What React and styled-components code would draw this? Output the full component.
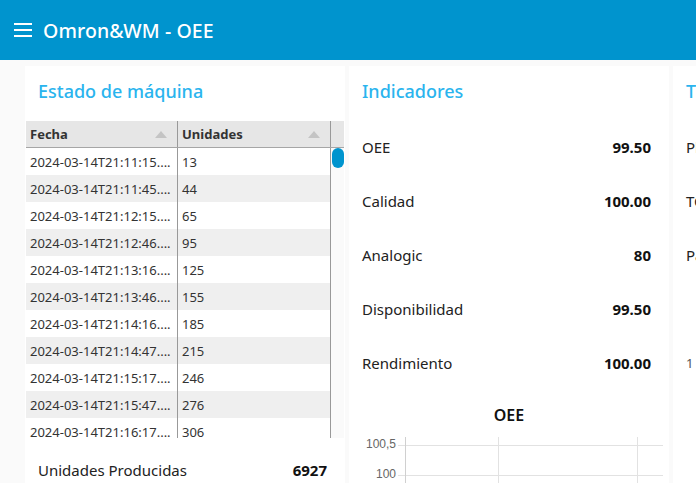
import React from "react";
import styled, { createGlobalStyle } from "styled-components";

const GlobalStyle = createGlobalStyle`
  html, body {
    margin: 0;
    padding: 0;
    background: #fafafa;
    font-family: "Noto Sans", "Open Sans", sans-serif;
    overflow: hidden;
  }
`;

const Toolbar = styled.header`
  height: 60px;
  background: #0094ce;
  display: flex;
  align-items: center;
  padding-left: 14px;
  gap: 11px;
  color: #fff;
`;

const Burger = styled.div`
  width: 18px;
  display: flex;
  flex-direction: column;
  gap: 4px;
  span {
    display: block;
    height: 2px;
    background: #fff;
  }
`;

const AppTitle = styled.h1`
  margin: 0;
  font-size: 19.5px;
  font-weight: 500;
  letter-spacing: 0.1px;
`;

const Content = styled.main`
  display: flex;
  gap: 4px;
  padding: 6px 0 0 25px;
  height: 417px;
  width: 1100px;
`;

const Card = styled.section`
  width: 320px;
  flex: none;
  background: #fff;
  display: flex;
  flex-direction: column;
  overflow: hidden;
  & > * {
    flex: none;
  }
`;

const CardTitle = styled.h2`
  margin: 0;
  height: 55px;
  box-sizing: border-box;
  padding: 13px 13px 0;
  font-size: 18px;
  font-weight: 500;
  color: #2ab4ee;
`;

const Table = styled.div`
  margin-left: 1px;
  width: 318px;
  display: flex;
  flex-direction: column;
`;

const HeadRow = styled.div`
  display: grid;
  grid-template-columns: 152px 153px 13px;
  height: 27px;
  background: #e6e6e6;
  border-bottom: 1px solid #a6a6a6;
  box-sizing: border-box;
`;

const HeadCell = styled.div`
  display: flex;
  align-items: center;
  justify-content: space-between;
  padding: 0 10px 0 4px;
  font-size: 13px;
  font-weight: 700;
  color: #333;
  border-right: ${(p) => (p.$last ? "none" : "1px solid #999")};
`;

const SortArrow = styled.span`
  width: 0;
  height: 0;
  border-left: 6px solid transparent;
  border-right: 6px solid transparent;
  border-bottom: 7px solid #c4c4c4;
`;

const BodyWrap = styled.div`
  display: grid;
  grid-template-columns: 305px 13px;
  height: 290px;
  overflow: hidden;
`;

const Rows = styled.div`
  display: flex;
  flex-direction: column;
`;

const Row = styled.div`
  display: grid;
  grid-template-columns: 152px 153px;
  flex: none;
  height: 27px;
  background: ${(p) => (p.$odd ? "#efefef" : "#fff")};
`;

const Cell = styled.div`
  display: flex;
  align-items: center;
  padding-left: 4px;
  font-size: 13px;
  color: #333;
  white-space: nowrap;
  overflow: hidden;
  border-right: 1px solid #999;
`;

const ScrollTrack = styled.div`
  background: #fafafa;
  position: relative;
`;

const Thumb = styled.div`
  position: absolute;
  top: 0;
  left: 1px;
  width: 12px;
  height: 20px;
  border-radius: 7px;
  background: #0094ce;
`;

const StatRow = styled.div`
  height: ${(p) => p.$h || 54}px;
  display: flex;
  align-items: ${(p) => (p.$end ? "flex-end" : "center")};
  justify-content: space-between;
  padding: 0 18px ${(p) => (p.$end ? 2 : 3)}px 13px;
  box-sizing: border-box;
  font-size: 15px;
  color: #222;
`;

const StatValue = styled.span`
  font-weight: 700;
  color: #111;
`;

const SmallText = styled.span`
  font-size: 13px;
  color: #555;
`;

const ChartBox = styled.div`
  display: flex;
  flex-direction: column;
  align-items: center;
`;

const ChartTitle = styled.div`
  margin-top: 13px;
  height: 22px;
  line-height: 22px;
  font-size: 16px;
  font-weight: 600;
  color: #111;
`;

function Chart() {
  return (
    <svg width="320" height="80" viewBox="0 0 320 80" style={{ display: "block" }}>
      <g stroke="#e2e2e2" strokeWidth="1">
        <line x1="49" y1="19.5" x2="314" y2="19.5" />
        <line x1="49" y1="49.5" x2="314" y2="49.5" />
        <line x1="149.5" y1="11" x2="149.5" y2="80" />
        <line x1="288.5" y1="11" x2="288.5" y2="80" />
      </g>
      <line x1="56.5" y1="11" x2="56.5" y2="80" stroke="#d0d0d0" />
      <g fontFamily="Liberation Sans, Arial, sans-serif" fontSize="12" fill="#666" textAnchor="end">
        <text x="47" y="22">100,5</text>
        <text x="47" y="52">100</text>
      </g>
    </svg>
  );
}

const records = [
  ["2024-03-14T21:11:15....", "13"],
  ["2024-03-14T21:11:45....", "44"],
  ["2024-03-14T21:12:15....", "65"],
  ["2024-03-14T21:12:46....", "95"],
  ["2024-03-14T21:13:16....", "125"],
  ["2024-03-14T21:13:46....", "155"],
  ["2024-03-14T21:14:16....", "185"],
  ["2024-03-14T21:14:47....", "215"],
  ["2024-03-14T21:15:17....", "246"],
  ["2024-03-14T21:15:47....", "276"],
  ["2024-03-14T21:16:17....", "306"],
];

const indicators = [
  ["OEE", "99.50"],
  ["Calidad", "100.00"],
  ["Analogic", "80"],
  ["Disponibilidad", "99.50"],
  ["Rendimiento", "100.00"],
];

export default function App() {
  return (
    <>
      <GlobalStyle />
      <Toolbar>
        <Burger>
          <span />
          <span />
          <span />
        </Burger>
        <AppTitle>Omron&amp;WM - OEE</AppTitle>
      </Toolbar>
      <Content>
        <Card>
          <CardTitle>Estado de máquina</CardTitle>
          <Table>
            <HeadRow>
              <HeadCell>
                Fecha <SortArrow />
              </HeadCell>
              <HeadCell>
                Unidades <SortArrow />
              </HeadCell>
              <HeadCell $last />
            </HeadRow>
            <BodyWrap>
              <Rows>
                {records.map(([f, u], i) => (
                  <Row key={f} $odd={i % 2 === 1}>
                    <Cell>{f}</Cell>
                    <Cell>{u}</Cell>
                  </Row>
                ))}
              </Rows>
              <ScrollTrack>
                <Thumb />
              </ScrollTrack>
            </BodyWrap>
          </Table>
          <StatRow $h={44} $end>
            <span>Unidades Producidas</span>
            <StatValue>6927</StatValue>
          </StatRow>
        </Card>
        <Card>
          <CardTitle>Indicadores</CardTitle>
          {indicators.map(([k, v]) => (
            <StatRow key={k}>
              <span>{k}</span>
              <StatValue>{v}</StatValue>
            </StatRow>
          ))}
          <ChartBox>
            <ChartTitle>OEE</ChartTitle>
          </ChartBox>
          <Chart />
        </Card>
        <Card>
          <CardTitle>Tiempos</CardTitle>
          <StatRow>
            <span>Planificado</span>
          </StatRow>
          <StatRow>
            <span>TCiclo</span>
          </StatRow>
          <StatRow>
            <span>Paros</span>
          </StatRow>
          <StatRow />
          <StatRow>
            <SmallText>1</SmallText>
          </StatRow>
        </Card>
      </Content>
    </>
  );
}
